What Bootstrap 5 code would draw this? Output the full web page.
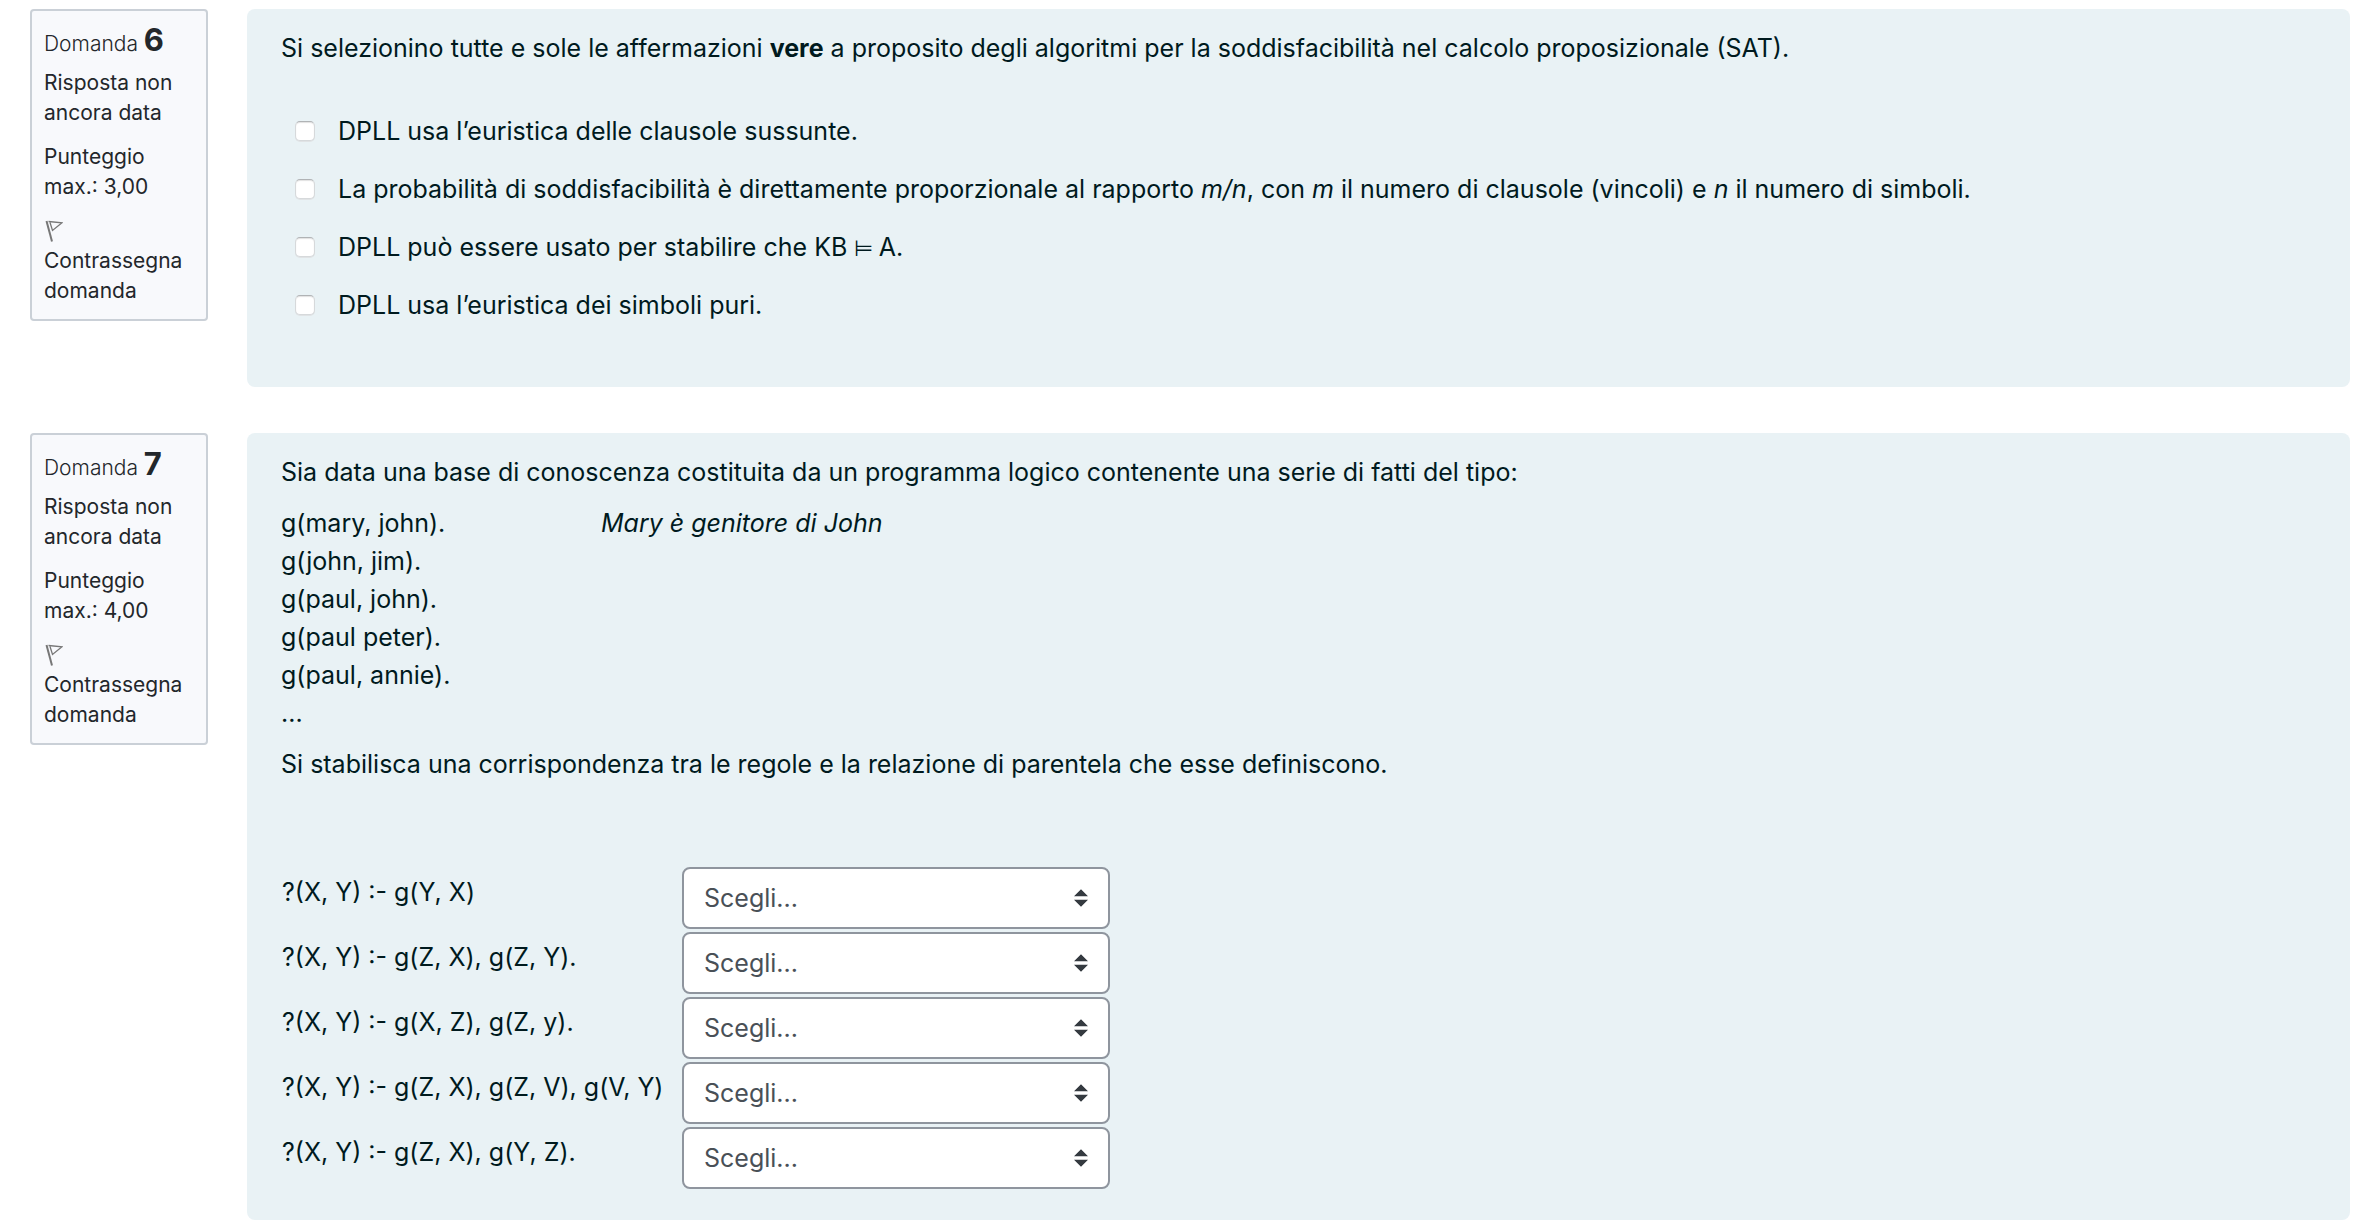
<!DOCTYPE html>
<html lang="it">
<head>
<meta charset="utf-8">
<meta name="viewport" content="width=device-width, initial-scale=1">
<title>Quiz</title>
<link href="https://cdn.jsdelivr.net/npm/bootstrap@5.3.0/dist/css/bootstrap.min.css" rel="stylesheet">
<style>
body{font-family:Inter,"Liberation Sans",sans-serif;font-size:25px;line-height:38px;color:#001a1e;background:#fff}
.quiz{padding:9px 8px 8px 30px}
.question{gap:39px;margin-bottom:46px}
.question:last-child{margin-bottom:0}
.info{width:178px;padding:11px 12px 13px;border:2px solid #cad0d7;border-radius:4px;background:#f8f9fc;color:#23272b;font-size:21px;line-height:30px}
.info h2{font-size:21px;line-height:36px;font-weight:300;margin-bottom:6px}
.info h2 span{font-size:31px;font-weight:700}
.info p{margin-bottom:14px}
.flagbtn{color:inherit;font:inherit;text-align:left}
.flagbtn svg{display:block;margin:4px 0 4px 1px}
.formulation{min-width:0;padding:20px 34px 28px;border-radius:8px;background:#e9f2f5}
.formulation p{margin-bottom:13px}
.answers{padding:32px 0 35px 14px;gap:20px}
.answers input{appearance:none;flex:none;width:20px;height:20px;margin:0;border:1px solid #d6d9db;border-top-color:#b0b3b5;border-radius:5px;background:#fff;box-shadow:inset 0 1px 1px #e2e2e2,0 1px 0 #e0e3e5}
.answers input:checked{background:#0f6cbf}
.answers .option{gap:23px}
.models{font-size:22px;line-height:1}
.fact{display:inline-block;width:320px}
.matching{margin-top:84px}
.matching th{font-weight:400;vertical-align:top;padding:6px 0 0 1px;width:401px}
.matching td{padding:0 0 3px}
.choice{width:428px;height:62px;padding:0 56px 0 20px;border:2px solid #8f959e;border-radius:8px;color:#495057;font-size:25px;line-height:38px;background:#fff url("data:image/svg+xml,%3Csvg xmlns='http://www.w3.org/2000/svg' viewBox='0 0 4 5'%3E%3Cpath fill='%23343a40' d='M2 0L0 2h4zm0 5L0 3h4z'/%3E%3C/svg%3E") no-repeat right 20px center/14px 18px}
</style>
</head>
<body>
<main class="quiz">
  <section class="question d-flex align-items-start">
    <aside class="info flex-shrink-0">
      <h2>Domanda <span>6</span></h2>
      <p>Risposta non ancora data</p>
      <p>Punteggio max.: 3,00</p>
      <button type="button" class="flagbtn btn p-0 border-0"><svg width="18" height="22" viewBox="0 0 18 22" fill="none" stroke="#777"><path stroke-width="2" d="M1.500 1L7 21.500"/><path stroke-width="1.300" d="M3.500 1.500L17 2.800L7.500 10.500L5 2.500"/></svg>Contrassegna domanda</button>
    </aside>
    <div class="formulation flex-grow-1">
      <p>Si selezionino tutte e sole le affermazioni <strong>vere</strong> a proposito degli algoritmi per la soddisfacibilità nel calcolo proposizionale (SAT).</p>
      <div class="answers d-flex flex-column">
        <div class="option d-flex align-items-center"><input type="checkbox" id="a1"><label for="a1">DPLL usa l’euristica delle clausole sussunte.</label></div>
        <div class="option d-flex align-items-center"><input type="checkbox" id="a2"><label for="a2">La probabilità di soddisfacibilità è direttamente proporzionale al rapporto <em>m/n</em>, con <em>m</em> il numero di clausole (vincoli) e <em>n</em> il numero di simboli.</label></div>
        <div class="option d-flex align-items-center"><input type="checkbox" id="a3"><label for="a3">DPLL può essere usato per stabilire che KB<span class="models"> ⊨ </span>A.</label></div>
        <div class="option d-flex align-items-center"><input type="checkbox" id="a4"><label for="a4">DPLL usa l’euristica dei simboli puri.</label></div>
      </div>
    </div>
  </section>

  <section class="question d-flex align-items-start">
    <aside class="info flex-shrink-0">
      <h2>Domanda <span>7</span></h2>
      <p>Risposta non ancora data</p>
      <p>Punteggio max.: 4,00</p>
      <button type="button" class="flagbtn btn p-0 border-0"><svg width="18" height="22" viewBox="0 0 18 22" fill="none" stroke="#777"><path stroke-width="2" d="M1.500 1L7 21.500"/><path stroke-width="1.300" d="M3.500 1.500L17 2.800L7.500 10.500L5 2.500"/></svg>Contrassegna domanda</button>
    </aside>
    <div class="formulation flex-grow-1">
      <p>Sia data una base di conoscenza costituita da un programma logico contenente una serie di fatti del tipo:</p>
      <p><span class="fact">g(mary, john).</span><em>Mary è genitore di John</em><br>g(john, jim).<br>g(paul, john).<br>g(paul peter).<br>g(paul, annie).<br>...</p>
      <p>Si stabilisca una corrispondenza tra le regole e la relazione di parentela che esse definiscono.</p>
      <table class="matching">
        <tbody>
          <tr><th scope="row"><label for="m1">?(X, Y) :- g(Y, X)</label></th><td><select class="choice form-select" id="m1"><option>Scegli...</option></select></td></tr>
          <tr><th scope="row"><label for="m2">?(X, Y) :- g(Z, X), g(Z, Y).</label></th><td><select class="choice form-select" id="m2"><option>Scegli...</option></select></td></tr>
          <tr><th scope="row"><label for="m3">?(X, Y) :- g(X, Z), g(Z, y).</label></th><td><select class="choice form-select" id="m3"><option>Scegli...</option></select></td></tr>
          <tr><th scope="row"><label for="m4">?(X, Y) :- g(Z, X), g(Z, V), g(V, Y)</label></th><td><select class="choice form-select" id="m4"><option>Scegli...</option></select></td></tr>
          <tr><th scope="row"><label for="m5">?(X, Y) :- g(Z, X), g(Y, Z).</label></th><td><select class="choice form-select" id="m5"><option>Scegli...</option></select></td></tr>
        </tbody>
      </table>
    </div>
  </section>
</main>
<script src="https://cdn.jsdelivr.net/npm/bootstrap@5.3.0/dist/js/bootstrap.bundle.min.js"></script>
</body>
</html>
